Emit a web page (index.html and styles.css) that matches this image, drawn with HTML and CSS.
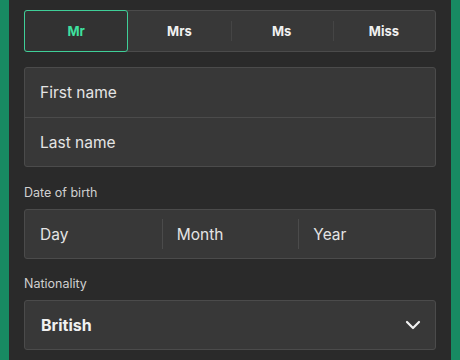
FILE: index.html
```html
<!DOCTYPE html>
<html lang="en">
<head>
    <meta charset="UTF-8">
    <title>Your details</title>
    <link rel="stylesheet" href="styles.css">
</head>
<body>
<div class="frame">
    <div class="edge"></div>
    <div class="panel">
        <div class="titles">
            <button class="title-btn active">Mr</button>
            <button class="title-btn">Mrs</button>
            <button class="title-btn">Ms</button>
            <button class="title-btn">Miss</button>
        </div>

        <div class="box names">
            <div class="row">First name</div>
            <div class="row">Last name</div>
        </div>

        <div class="field-label">Date of birth</div>
        <div class="box dob">
            <div class="cell">Day</div>
            <div class="cell">Month</div>
            <div class="cell">Year</div>
        </div>

        <div class="field-label nat">Nationality</div>
        <div class="box select">
            <span class="select-value">British</span>
            <svg class="chevron" width="16" height="10" viewBox="0 0 16 10">
                <path d="M2 2 L8 8 L14 2" fill="none" stroke="#f2f2f2" stroke-width="2.2" stroke-linecap="round" stroke-linejoin="round"/>
            </svg>
        </div>
    </div>
    <div class="edge"></div>
</div>
</body>
</html>
```

FILE: styles.css
```css
body {
    margin: 0;
    font-family: 'Inter', 'Liberation Sans', sans-serif;
    background: #2a2a2a;
    color: #e4e4e4;
}

.frame {
    display: flex;
    height: 360px;
}

.edge {
    width: 9px;
    background-color: #188a62;
}

.panel {
    flex: 1;
    padding: 10px 15px 0 15px;
    background-color: #2a2a2a;
}

.titles {
    display: flex;
    height: 42px;
    box-sizing: border-box;
    border: 1px solid #4b4b4b;
    border-radius: 3px;
    background-color: #383838;
}

.title-btn {
    flex: 1;
    position: relative;
    background: none;
    border: none;
    color: #f0f0f0;
    font-family: inherit;
    font-size: 13px;
    font-weight: 700;
    padding: 0;
}

.title-btn + .title-btn::before {
    content: "";
    position: absolute;
    left: 0;
    top: 10px;
    bottom: 10px;
    width: 1px;
    background-color: #454545;
}

.title-btn + .title-btn:nth-child(2)::before {
    display: none;
}

.title-btn.active {
    margin: -1px 0 -1px -1px;
    border: 1px solid #3fcf98;
    border-radius: 3px;
    color: #3fe09f;
    background-color: #323232;
}

.box {
    border: 1px solid #4b4b4b;
    border-radius: 3px;
    background-color: #383838;
}

.names {
    margin-top: 15px;
}

.row {
    height: 49px;
    display: flex;
    align-items: center;
    padding-left: 15px;
    font-size: 15.5px;
}

.row + .row {
    height: 48px;
    border-top: 1px solid #4b4b4b;
}

.field-label {
    margin: 18px 0 8px;
    font-size: 12.5px;
    line-height: 16px;
    color: #d0d0d0;
}

.field-label.nat {
    margin-top: 17px;
}

.dob {
    display: flex;
    height: 48px;
}

.cell {
    flex: 1;
    display: flex;
    align-items: center;
    padding-left: 15px;
    font-size: 15.5px;
    position: relative;
}

.cell + .cell::before {
    content: "";
    position: absolute;
    left: 0;
    top: 9px;
    bottom: 9px;
    width: 1px;
    background-color: #4b4b4b;
}

.select {
    display: flex;
    align-items: center;
    justify-content: space-between;
    height: 48px;
    padding: 0 14px 0 16px;
}

.select-value {
    font-size: 16px;
    font-weight: 700;
    color: #f0f0f0;
}
```
